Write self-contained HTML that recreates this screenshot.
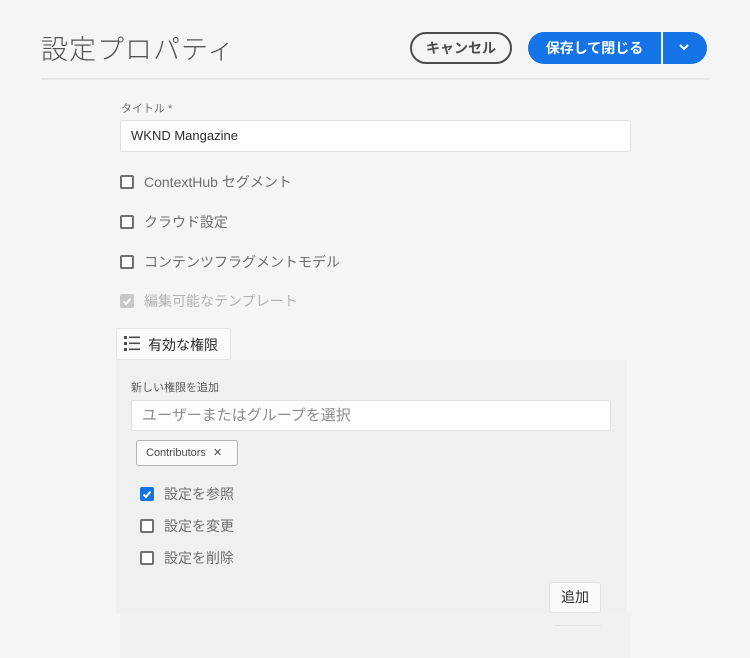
<!DOCTYPE html>
<html><head><meta charset="utf-8"><style>
*{box-sizing:border-box;margin:0;padding:0}
body{width:750px;height:658px;background:#f5f5f5;font-family:"Liberation Sans","Noto Sans CJK JP",sans-serif;position:relative;overflow:hidden;color:#4b4b4b}
.a{position:absolute}
.cb{position:absolute;width:14px;height:14px;border:2px solid #707070;border-radius:2px;background:#fff}
.lbl{position:absolute;font-size:14px;color:#6e6e6e;line-height:16px}
</style></head><body>
<div class="a" style="left:41px;top:28px;font-size:27px;font-weight:300;color:#555;letter-spacing:1px">設定プロパティ</div>
<div class="a" style="left:410px;top:32px;width:102px;height:32px;border:2px solid #4b4b4b;border-radius:16px;font-size:14px;font-weight:bold;color:#4b4b4b;text-align:center;line-height:28px">キャンセル</div>
<div class="a" style="left:528px;top:32px;width:179px;height:32px;border-radius:16px;background:#1473e6"></div>
<div class="a" style="left:528px;top:32px;width:133px;height:32px;font-size:14px;font-weight:bold;color:#fff;text-align:center;line-height:32px">保存して閉じる</div>
<div class="a" style="left:661px;top:32px;width:2px;height:32px;background:#f5f5f5"></div>
<svg class="a" style="left:678px;top:42px" width="12" height="10" viewBox="0 0 12 10"><path d="M2 3l4 4 4-4" stroke="#fff" stroke-width="2" fill="none"/></svg>
<div class="a" style="left:41px;top:78px;width:668px;height:2px;background:#e6e6e6"></div>
<div class="a" style="left:121px;top:100px;font-size:11px;color:#6e6e6e">タイトル *</div>
<div class="a" style="left:120px;top:120px;width:511px;height:32px;background:#fff;border:1px solid #e1e1e1;border-radius:3px;font-size:13px;color:#2c2c2c;line-height:30px;padding-left:10px">WKND Mangazine</div>
<div class="cb" style="left:120px;top:175px"></div><div class="lbl" style="left:144px;top:174px">ContextHub セグメント</div>
<div class="cb" style="left:120px;top:215px"></div><div class="lbl" style="left:144px;top:214px">クラウド設定</div>
<div class="cb" style="left:120px;top:255px"></div><div class="lbl" style="left:144px;top:254px">コンテンツフラグメントモデル</div>
<div class="a" style="left:120px;top:294px;width:14px;height:14px;background:#c8c8c8;border-radius:2px"></div>
<svg class="a" style="left:120px;top:294px" width="14" height="14"><path d="M3.5 7.5l2.5 2.5 4.5-5.5" stroke="#fff" stroke-width="2" fill="none"/></svg>
<div class="lbl" style="left:144px;top:293px;color:#b3b3b3">編集可能なテンプレート</div>
<div class="a" style="left:116px;top:360px;width:511px;height:253px;background:#f0f0f0"></div>
<div class="a" style="left:120px;top:613px;width:511px;height:45px;background:#f1f1f1"></div>
<div class="a" style="left:116px;top:328px;width:115px;height:32px;background:#fafafa;border:1px solid #e6e6e6;border-radius:3px"></div>
<svg class="a" style="left:123px;top:335px" width="18" height="18"><g fill="#4b4b4b"><rect x="1" y="1" width="3" height="3"/><rect x="1" y="7" width="3" height="3"/><rect x="1" y="13" width="3" height="3"/><rect x="6" y="1.5" width="11" height="1.6"/><rect x="6" y="7.5" width="11" height="1.6"/><rect x="6" y="13.5" width="11" height="1.6"/></g></svg>
<div class="a" style="left:148px;top:335px;font-size:14px;color:#2c2c2c">有効な権限</div>
<div class="a" style="left:131px;top:379px;font-size:11px;color:#5a5a5a">新しい権限を追加</div>
<div class="a" style="left:131px;top:400px;width:480px;height:31px;background:#fff;border:1px solid #e1e1e1;border-radius:2px;font-size:15px;color:#8a8a8a;line-height:29px;padding-left:10px">ユーザーまたはグループを選択</div>
<div class="a" style="left:136px;top:440px;width:102px;height:26px;background:#fafafa;border:1px solid #b3b3b3;border-radius:3px;font-size:11px;color:#4b4b4b;line-height:24px;padding-left:9px">Contributors <span style="margin-left:4px">✕</span></div>
<div class="a" style="left:140px;top:487px;width:14px;height:14px;background:#1473e6;border-radius:2px"></div>
<svg class="a" style="left:140px;top:487px" width="14" height="14"><path d="M3.5 7.5l2.5 2.5 4.5-5.5" stroke="#fff" stroke-width="2" fill="none"/></svg>
<div class="lbl" style="left:164px;top:486px">設定を参照</div>
<div class="cb" style="left:140px;top:519px"></div><div class="lbl" style="left:164px;top:518px">設定を変更</div>
<div class="cb" style="left:140px;top:551px"></div><div class="lbl" style="left:164px;top:550px">設定を削除</div>
<div class="a" style="left:549px;top:582px;width:52px;height:31px;background:#fafafa;border:1px solid #e1e1e1;border-radius:3px;font-size:14px;color:#2c2c2c;text-align:center;line-height:29px">追加</div>
<div class="a" style="left:555px;top:625px;width:46px;height:1px;background:#e3e3e3"></div>
</body></html>
